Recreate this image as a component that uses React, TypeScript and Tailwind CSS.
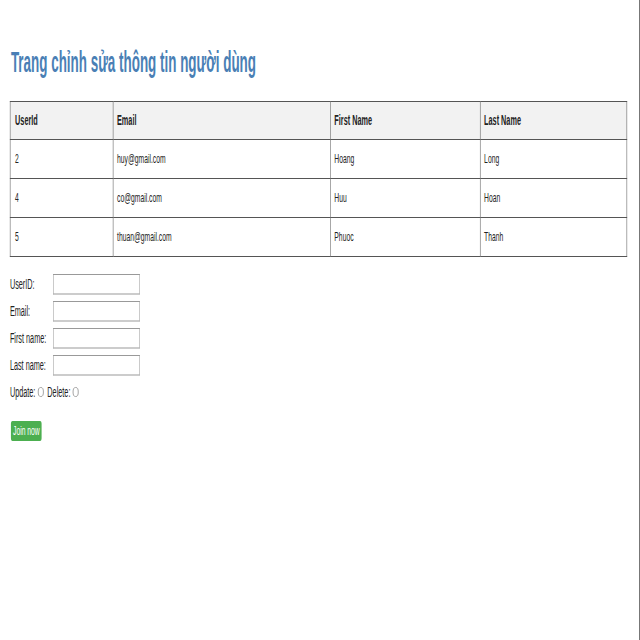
const users = [
  { id: "2", email: "huy@gmail.com", first: "Hoang", last: "Long" },
  { id: "4", email: "co@gmail.com", first: "Huu", last: "Hoan" },
  { id: "5", email: "thuan@gmail.com", first: "Phuoc", last: "Thanh" },
];

const fields = ["UserID:", "Email:", "First name:", "Last name:"];

function Radio() {
  return <span className="inline-block w-[11px] h-[10px] rounded-full border border-[#888] bg-white" />;
}

// Trang gốc rộng ~1230px, bị ép ngang còn 640px
export default function App() {
  return (
    <div className="w-[640px] h-[640px] overflow-hidden bg-white border-r border-[#777]">
      <div className="w-[1231px] origin-top-left scale-x-[0.52] font-['Liberation_Sans',Arial,sans-serif] text-[#222]">
        <div className="pl-[19px] pt-[45px]">
          {/* Tiêu đề */}
          <h1 className="pl-[2px] h-[34px] text-[30px] font-bold text-[#4a7fb5] leading-[34px] whitespace-nowrap">
            <span className="inline-block origin-left scale-x-[0.86]">Trang chỉnh sửa thông tin người dùng</span>
          </h1>

          {/* Bảng người dùng */}
          <table className="mt-[22px] w-[1187px] border-collapse border border-[#555] text-[13px]">
            <thead>
              <tr className="bg-[#f2f2f2] h-[38px]">
                <th className="w-[198px] text-left text-[14px] font-bold pl-[9px] border border-[#555]">UserId</th>
                <th className="w-[418px] text-left text-[14px] font-bold pl-[7px] border border-[#555]">Email</th>
                <th className="w-[288px] text-left text-[14px] font-bold pl-[7px] border border-[#555]">First Name</th>
                <th className="text-left text-[14px] font-bold pl-[7px] border border-[#555]">Last Name</th>
              </tr>
            </thead>
            <tbody>
              {users.map((u) => (
                <tr key={u.id} className="h-[39px]">
                  <td className="pl-[9px] border border-[#555]">{u.id}</td>
                  <td className="pl-[7px] border border-[#555]">{u.email}</td>
                  <td className="pl-[7px] border border-[#555]">{u.first}</td>
                  <td className="pl-[7px] border border-[#555]">{u.last}</td>
                </tr>
              ))}
            </tbody>
          </table>

          {/* Form sửa */}
          <div className="mt-[17px] flex flex-col gap-[6px] text-[14px]">
            {fields.map((f) => (
              <div key={f} className="flex items-center h-[21px]">
                <span className="w-[83px]">{f}</span>
                <input className="w-[167px] h-[21px] border border-[#999] border-b-2 border-b-[#ccc] bg-white" />
              </div>
            ))}
          </div>
          <div className="mt-[6px] h-[20px] flex items-center gap-[5px] text-[14px]">
            <span>Update:</span>
            <Radio />
            <span className="ml-[2px]">Delete:</span>
            <Radio />
          </div>
          <button className="mt-[19px] ml-[2px] h-[20px] px-[4px] bg-[#4caf50] text-white text-[13px] rounded-[3px]">
            Join now
          </button>
        </div>
      </div>
    </div>
  );
}
